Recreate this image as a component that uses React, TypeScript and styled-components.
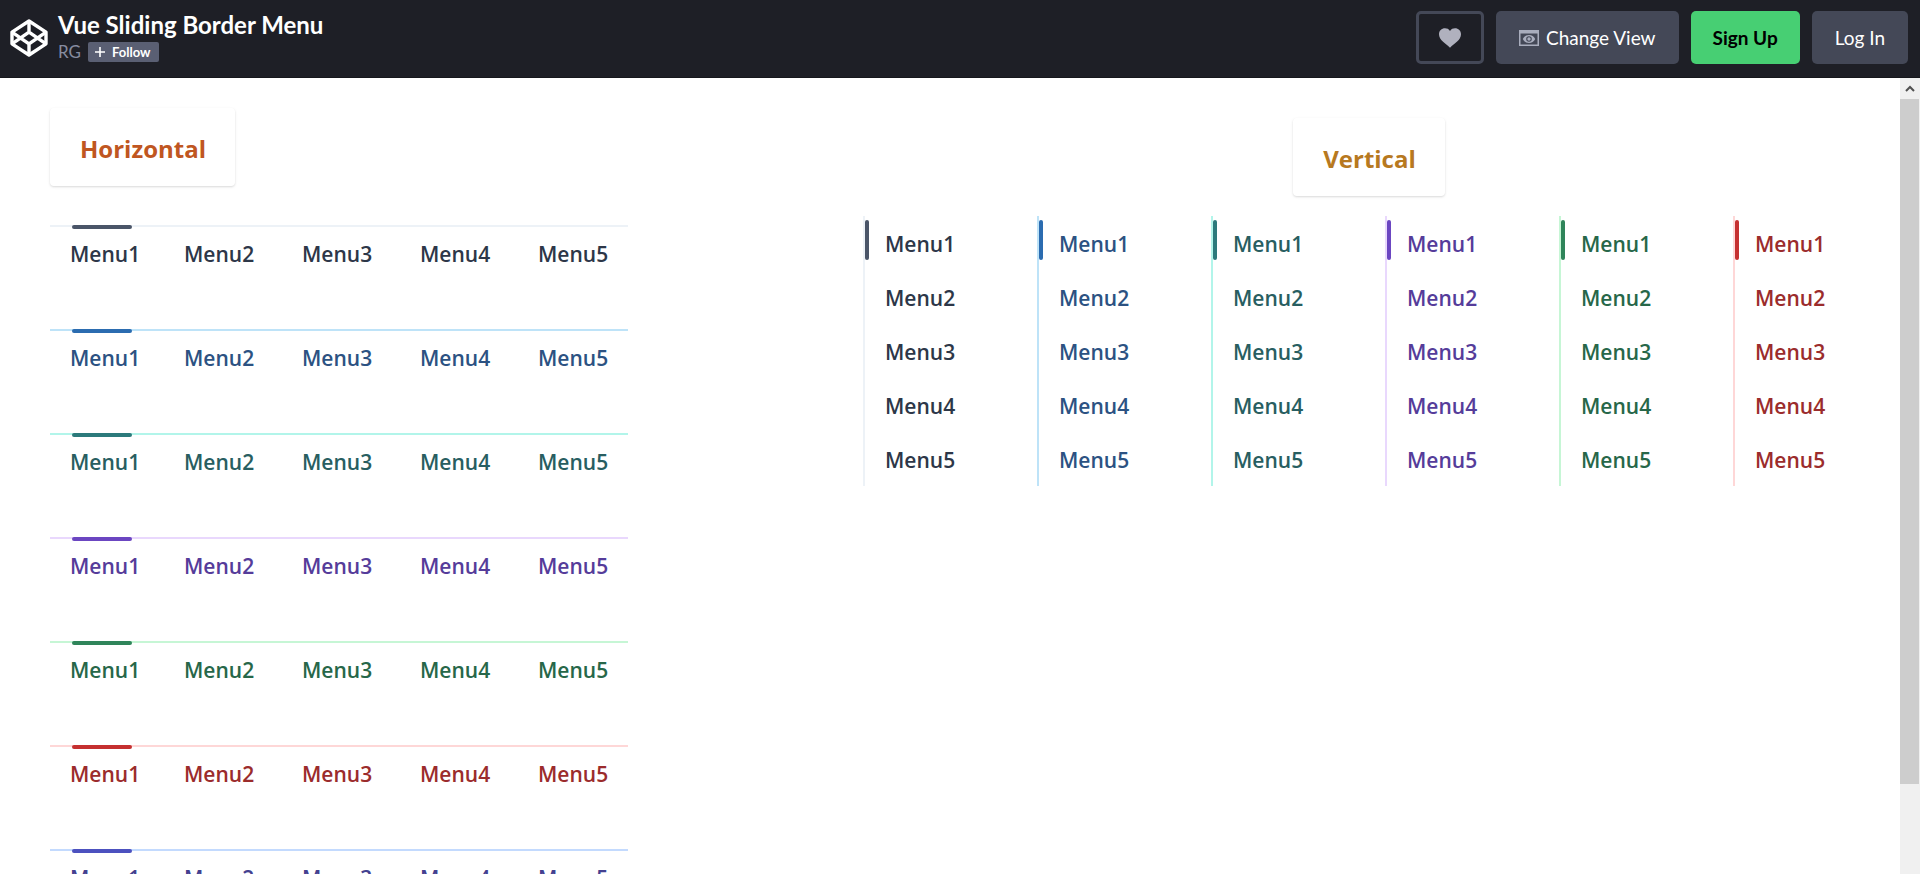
import React, { useState } from 'react';
import styled, { createGlobalStyle } from 'styled-components';

type Tone = { name: string; line: string; bar: string; text: string };

const tones: Tone[] = [
  { name: 'Gray', line: '#edf2f7', bar: '#4a5568', text: '#2d3748' },
  { name: 'Blue', line: '#bee3f8', bar: '#2b6cb0', text: '#2c5282' },
  { name: 'Teal', line: '#b2f5ea', bar: '#2c7a7b', text: '#285e61' },
  { name: 'Purple', line: '#e9d8fd', bar: '#6b46c1', text: '#553c9a' },
  { name: 'Green', line: '#c6f6d5', bar: '#2f855a', text: '#276749' },
  { name: 'Red', line: '#fed7d7', bar: '#c53030', text: '#9b2c2c' },
  { name: 'Indigo', line: '#c3dafe', bar: '#4c51bf', text: '#434190' },
];

const items = ['Menu1', 'Menu2', 'Menu3', 'Menu4', 'Menu5'];

const GlobalStyle = createGlobalStyle`
  * { box-sizing: border-box; }
  body {
    margin: 0;
    background: #fff;
    font-family: 'Open Sans', 'Noto Sans', sans-serif;
  }
`;

const Page = styled.div`
  display: flex;
  flex-direction: column;
  height: 100vh;
  overflow: hidden;
`;

const Header = styled.header`
  display: flex;
  flex: none;
  align-items: flex-start;
  justify-content: space-between;
  height: 78px;
  padding: 11px 12px 0 10px;
  background: #1e1f26;
  border-bottom: 1px solid #16171c;
  font-family: Lato, sans-serif;
`;

const Brand = styled.div`
  display: flex;
  gap: 10px;
`;

const Logo = styled.svg`
  width: 38px;
  height: 38px;
  margin-top: 8px;
`;

const PenTitle = styled.h1`
  margin: 0;
  color: #fff;
  font-size: 24px;
  font-weight: 700;
  line-height: 28px;
`;

const Byline = styled.div`
  display: flex;
  align-items: center;
  gap: 7px;
  margin-top: 3px;
`;

const Author = styled.a`
  color: #868ca0;
  font-size: 17px;
  line-height: 20px;
  text-decoration: none;
`;

const FollowButton = styled.button`
  display: flex;
  align-items: center;
  gap: 7px;
  height: 20px;
  padding: 0 9px 0 7px;
  border: 0;
  border-radius: 2px;
  background: #5a5f73;
  color: #fff;
  font: 700 13px/20px Lato, sans-serif;
`;

const Actions = styled.div`
  display: flex;
  gap: 12px;
`;

const ActionButton = styled.button<{ $kind?: 'outline' | 'primary' }>`
  display: flex;
  align-items: center;
  justify-content: center;
  gap: 7px;
  height: 53px;
  padding: 0 ${(p) => (p.$kind === 'outline' ? 20 : p.$kind === 'primary' ? 22 : 23)}px;
  border: ${(p) => (p.$kind === 'outline' ? '3px solid #444857' : '0')};
  border-radius: 5px;
  background: ${(p) =>
    p.$kind === 'outline' ? 'transparent' : p.$kind === 'primary' ? '#47cf73' : '#444857'};
  color: ${(p) => (p.$kind === 'primary' ? '#000' : '#fff')};
  font: ${(p) => (p.$kind === 'primary' ? 700 : 400)} 19px/24px Lato, sans-serif;
`;

const Viewport = styled.div`
  display: flex;
  flex: 1;
  min-height: 0;
`;

const Content = styled.main`
  display: flex;
  flex: 1;
  align-items: flex-start;
  justify-content: space-between;
  padding: 30px 25px 0 50px;
  overflow: hidden;
`;

const HorizontalSection = styled.section`
  display: flex;
  flex-direction: column;
  align-items: flex-start;
  gap: 39px;
`;

const VerticalSection = styled.section`
  display: flex;
  flex-direction: column;
  align-items: center;
  gap: 20px;
  padding-top: 10px;
`;

const SectionTitle = styled.h2<{ $color: string }>`
  margin: 0;
  padding: 22px 29px 18px 30px;
  border-radius: 4px;
  box-shadow: 0 1px 3px 0 rgba(0, 0, 0, 0.1), 0 1px 2px 0 rgba(0, 0, 0, 0.06);
  color: ${(p) => p.$color};
  font-size: 24px;
  font-weight: 700;
  line-height: 38px;
`;

const MenuStack = styled.div`
  display: flex;
  flex-direction: column;
  gap: 50px;
`;

const MenuColumns = styled.div`
  display: grid;
  grid-template-columns: repeat(6, 142px);
  gap: 32px;
`;

const MenuNav = styled.nav<{ $tone: Tone }>`
  position: relative;
  color: ${(p) => p.$tone.text};
  font-size: 21px;
  font-weight: 600;
  line-height: 34px;
`;

const HorizontalNav = styled(MenuNav)`
  border-top: 2px solid ${(p) => p.$tone.line};
`;

const VerticalNav = styled(MenuNav)`
  border-left: 2px solid ${(p) => p.$tone.line};
`;

const HorizontalList = styled.ul`
  display: grid;
  grid-template-columns: 114px repeat(3, 118px) auto;
  margin: 0;
  padding: 10px 20px 8px;
  list-style: none;
`;

const VerticalList = styled.ul`
  margin: 0;
  padding: 0 20px;
  list-style: none;
`;

const VerticalItem = styled.li`
  padding: 11px 0 9px;
`;

const MenuLink = styled.a`
  color: inherit;
  text-decoration: none;
`;

const HorizontalBar = styled.span<{ $tone: Tone }>`
  position: absolute;
  top: -2px;
  left: 22px;
  width: 60px;
  height: 4px;
  border-radius: 2px;
  background: ${(p) => p.$tone.bar};
  transition: transform 0.3s;
`;

const VerticalBar = styled.span<{ $tone: Tone }>`
  position: absolute;
  top: 4px;
  left: 0;
  width: 4px;
  height: 40px;
  border-radius: 2px;
  background: ${(p) => p.$tone.bar};
  transition: transform 0.3s;
`;

const Scrollbar = styled.div`
  display: flex;
  flex: none;
  flex-direction: column;
  width: 20px;
  background: #f0f0f0;
`;

const ScrollUp = styled.button`
  display: flex;
  align-items: center;
  justify-content: center;
  height: 21px;
  padding: 0;
  border: 0;
  background: transparent;
`;

const ScrollThumb = styled.div`
  flex: 685;
  margin-right: 1px;
  background: #cdcdcd;
`;

const ScrollTrack = styled.div`
  flex: 90;
`;

function HorizontalMenu({ tone }: { tone: Tone }) {
  const [active, setActive] = useState(0);
  const offset = active === 0 ? 0 : 114 + (active - 1) * 118;
  return (
    <HorizontalNav $tone={tone} aria-label={`${tone.name} horizontal`}>
      <HorizontalBar $tone={tone} style={{ transform: `translateX(${offset}px)` }} />
      <HorizontalList>
        {items.map((item, i) => (
          <li key={item}>
            <MenuLink href="#" onMouseEnter={() => setActive(i)}>{item}</MenuLink>
          </li>
        ))}
      </HorizontalList>
    </HorizontalNav>
  );
}

function VerticalMenu({ tone }: { tone: Tone }) {
  const [active, setActive] = useState(0);
  return (
    <VerticalNav $tone={tone} aria-label={`${tone.name} vertical`}>
      <VerticalBar $tone={tone} style={{ transform: `translateY(${active * 54}px)` }} />
      <VerticalList>
        {items.map((item, i) => (
          <VerticalItem key={item}>
            <MenuLink href="#" onMouseEnter={() => setActive(i)}>{item}</MenuLink>
          </VerticalItem>
        ))}
      </VerticalList>
    </VerticalNav>
  );
}

export default function App() {
  return (
    <Page>
      <GlobalStyle />
      <Header>
        <Brand>
          <Logo viewBox="0 0 38 38" fill="none" stroke="#fff" strokeWidth="3.4" strokeLinejoin="round" aria-hidden="true">
            <path d="M19 2 36 13.2v11.6L19 36 2 24.8V13.2Z" />
            <path d="M19 2v11.2M19 24.8V36M2 13.2l17 11.6 17-11.6M2 24.8l17-11.6 17 11.6" />
          </Logo>
          <div>
            <PenTitle>Vue Sliding Border Menu</PenTitle>
            <Byline>
              <Author href="#">RG</Author>
              <FollowButton type="button">
                <svg width="10" height="10" viewBox="0 0 10 10" stroke="#fff" strokeWidth="1.6" aria-hidden="true">
                  <path d="M5 0v10M0 5h10" />
                </svg>
                Follow
              </FollowButton>
            </Byline>
          </div>
        </Brand>
        <Actions>
          <ActionButton type="button" $kind="outline" aria-label="Love this pen">
            <svg width="22" height="20" viewBox="0 0 22 20" fill="#b0b1be" aria-hidden="true">
              <path d="M11 3C12.2 1 14 .3 16 .3c3.400 0 6 2.500 6 6C22 12 15.500 15.500 11 19.700 6.500 15.500 0 12 0 6.300c0-3.500 2.600-6 6-6C8 .3 9.800 1 11 3Z" />
            </svg>
          </ActionButton>
          <ActionButton type="button">
            <svg width="20" height="16" viewBox="0 0 20 16" aria-hidden="true">
              <path fill="#a9adbd" fillRule="evenodd" d="M0 0h20v16H0ZM1.500 3.500v11h17v-11Z" />
              <path fill="#a9adbd" fillRule="evenodd" d="M3.800 9C5 6.500 7.300 5 10 5s5 1.500 6.200 4c-1.200 2.500-3.500 4-6.200 4S5 11.500 3.800 9ZM10 6.200a2.800 2.800 0 1 0 0 5.600 2.800 2.800 0 0 0 0-5.600Z" />
              <circle cx="10" cy="9" r="1.700" fill="#a9adbd" />
            </svg>
            Change View
          </ActionButton>
          <ActionButton type="button" $kind="primary">Sign Up</ActionButton>
          <ActionButton type="button">Log In</ActionButton>
        </Actions>
      </Header>
      <Viewport>
        <Content>
          <HorizontalSection>
            <SectionTitle $color="#c05621">Horizontal</SectionTitle>
            <MenuStack>
              {tones.map((tone) => <HorizontalMenu key={tone.name} tone={tone} />)}
            </MenuStack>
          </HorizontalSection>
          <VerticalSection>
            <SectionTitle $color="#b7791f">Vertical</SectionTitle>
            <MenuColumns>
              {tones.slice(0, 6).map((tone) => <VerticalMenu key={tone.name} tone={tone} />)}
            </MenuColumns>
          </VerticalSection>
        </Content>
        <Scrollbar>
          <ScrollUp type="button" aria-label="Scroll up">
            <svg width="10" height="7" viewBox="0 0 10 7" fill="none" stroke="#505050" strokeWidth="2" aria-hidden="true">
              <path d="M1 6l4-4 4 4" />
            </svg>
          </ScrollUp>
          <ScrollThumb />
          <ScrollTrack />
        </Scrollbar>
      </Viewport>
    </Page>
  );
}
